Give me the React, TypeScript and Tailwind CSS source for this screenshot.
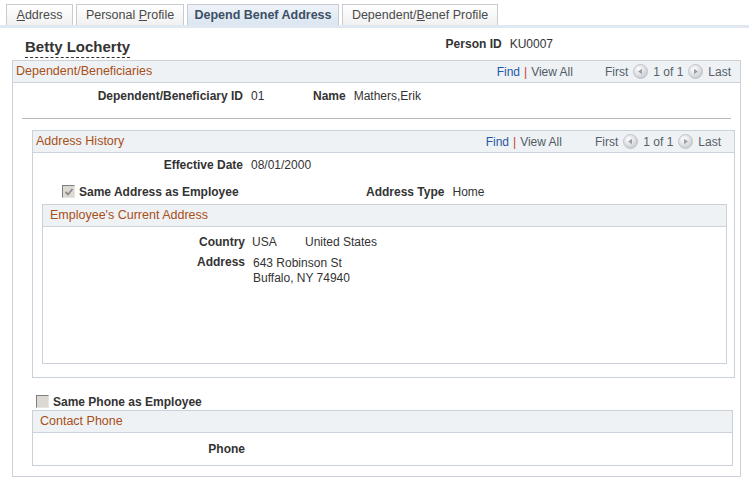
import React from "react";

const font = { fontFamily: '"Liberation Sans", Arial, sans-serif' };

function NavArrow({ dir }: { dir: "left" | "right" }) {
  return (
    <svg width="15" height="15" viewBox="0 0 15 15" className="inline-block">
      <defs>
        <radialGradient id={`g-${dir}`} cx="40%" cy="35%" r="70%">
          <stop offset="0%" stopColor="#ffffff" />
          <stop offset="100%" stopColor="#c4c8cc" />
        </radialGradient>
      </defs>
      <circle cx="7.5" cy="7.5" r="7" fill={`url(#g-${dir})`} stroke="#b9bec4" strokeWidth="0.8" />
      {dir === "left" ? (
        <path d="M5 7.5 L9 4.8 L9 10.2 Z" fill="#9aa0a6" />
      ) : (
        <path d="M10 7.5 L6 4.8 L6 10.2 Z" fill="#9aa0a6" />
      )}
    </svg>
  );
}

function Nav({ gap }: { gap: string }) {
  return (
    <div className="flex items-center text-[12px]">
      <span className="text-[#1f58a6]">Find</span>
      <span className="mx-[4px] text-[#c83a3a]">|</span>
      <span className="text-[#4f5b66]">View All</span>
      <div className={`flex items-center text-[#55606a] ${gap}`}>
        <span>First</span>
        <span className="mx-[5px] flex">
          <NavArrow dir="left" />
        </span>
        <span>1 of 1</span>
        <span className="mx-[5px] flex">
          <NavArrow dir="right" />
        </span>
        <span>Last</span>
      </div>
    </div>
  );
}

function Checkbox({ checked }: { checked?: boolean }) {
  return (
    <span className="inline-flex h-[13px] w-[13px] items-center justify-center border-t border-l border-t-[#7f7f7f] border-l-[#7f7f7f] border-b border-r border-b-[#e4e4e4] border-r-[#e4e4e4] bg-[#dcd9d2]">
      {checked && (
        <svg width="10" height="10" viewBox="0 0 10 10">
          <path d="M1.5 5 L4 7.5 L8.5 2" fill="none" stroke="#8a8a8a" strokeWidth="1.8" />
        </svg>
      )}
    </span>
  );
}

function SectionHeader({
  title,
  pad = "pl-[3px]",
  children,
}: {
  title: string;
  pad?: string;
  children?: React.ReactNode;
}) {
  return (
    <div className={`flex h-[22px] items-center justify-between border-b border-[#cdd3da] bg-[#eff2f4] pr-[3px] ${pad}`}>
      <span className="text-[12.5px] text-[#a84f18]">{title}</span>
      {children}
    </div>
  );
}

export default function App() {
  const tabs = [
    { label: "Address", u: 0, w: "w-[67px]" },
    { label: "Personal Profile", u: 9, w: "w-[108px]" },
    { label: "Depend Benef Address", u: -1, w: "w-[152px]", active: true },
    { label: "Dependent/Benef Profile", u: 10, w: "w-[156px]" },
  ];

  return (
    <div style={font} className="h-[483px] w-[749px] overflow-hidden bg-white text-[12px] text-[#333]">
      {/* Tabs */}
      <div className="flex items-end gap-[3px] pl-[6px] pt-[4px]">
        {tabs.map((t) => (
          <div
            key={t.label}
            className={`flex h-[21px] items-center justify-center border border-b-0 text-[12.5px] ${t.w} ${
              t.active
                ? "border-[#c5ccd4] bg-gradient-to-b from-[#eef3f8] to-[#dbe6f1] font-bold text-[#3d4f66]"
                : "border-[#c8ccd0] bg-gradient-to-b from-[#ffffff] to-[#f1f1f1] text-[#4a4a4a]"
            }`}
          >
            {t.u >= 0 ? (
              <span>
                {t.label.slice(0, t.u)}
                <span className="underline">{t.label[t.u]}</span>
                {t.label.slice(t.u + 1)}
              </span>
            ) : (
              t.label
            )}
          </div>
        ))}
      </div>
      <div className="h-[3px] bg-[#e0e8f1]" />

      {/* Person header */}
      <div className="flex h-[32px] items-center pl-[25px]">
        <span className="mb-[2px] self-end border-b border-dashed border-[#333] pb-[1px] text-[15px] font-bold leading-[18px]">
          Betty Locherty
        </span>
        <div className="ml-auto mr-[196px] mt-[7px] flex items-center self-start">
          <span className="font-bold">Person ID</span>
          <span className="ml-[8px]">KU0007</span>
        </div>
      </div>

      {/* Outer box */}
      <div className="ml-[12px] h-[417px] w-[729px] border border-[#cbd1d8]">
        <SectionHeader title="Dependent/Beneficiaries">
          <div className="pr-[6px]">
            <Nav gap="ml-[32px]" />
          </div>
        </SectionHeader>

        <div className="flex h-[26px] items-center">
          <span className="w-[230px] text-right font-bold">Dependent/Beneficiary ID</span>
          <span className="ml-[8px] w-[62px]">01</span>
          <span className="font-bold">Name</span>
          <span className="ml-[8px]">Mathers,Erik</span>
        </div>

        <div className="mx-[9px] mt-[9px] h-[2px] border-t border-[#b9b9b9]" />

        {/* Address History */}
        <div className="ml-[19px] mr-[5px] mt-[10px] h-[248px] border border-[#cbd1d8]">
          <SectionHeader title="Address History">
            <div className="pr-[10px]">
              <Nav gap="ml-[33px]" />
            </div>
          </SectionHeader>

          <div className="flex h-[23px] items-center">
            <span className="w-[210px] text-right font-bold">Effective Date</span>
            <span className="ml-[8px]">08/01/2000</span>
          </div>

          <div className="flex h-[28px] items-center whitespace-nowrap pt-[3px]">
            <span className="ml-[29px] flex">
              <Checkbox checked />
            </span>
            <span className="ml-[4px] w-[287px] font-bold">Same Address as Employee</span>
            <span className="font-bold">Address Type</span>
            <span className="ml-[8px]">Home</span>
          </div>

          {/* Employee's Current Address */}
          <div className="ml-[9px] mr-[7px] h-[160px] border border-[#cbd1d8]">
            <SectionHeader title="Employee's Current Address" pad="pl-[7px]" />
            <div className="flex h-[26px] items-center pt-[4px]">
              <span className="w-[202px] text-right font-bold">Country</span>
              <span className="ml-[7px] w-[53px]">USA</span>
              <span>United States</span>
            </div>
            <div className="flex">
              <span className="w-[202px] text-right font-bold">Address</span>
              <div className="ml-[8px] mt-[3px] leading-[15px]">
                <div>643 Robinson St</div>
                <div>Buffalo, NY 74940</div>
              </div>
            </div>
          </div>
        </div>

        {/* Same phone */}
        <div className="mt-[15px] flex h-[17px] items-center pl-[23px]">
          <Checkbox />
          <span className="ml-[4px] font-bold">Same Phone as Employee</span>
        </div>

        {/* Contact Phone */}
        <div className="ml-[19px] mr-[7px] h-[56px] border border-[#cbd1d8]">
          <SectionHeader title="Contact Phone" pad="pl-[7px]" />
          <div className="flex h-[32px] items-center">
            <span className="w-[212px] text-right font-bold">Phone</span>
          </div>
        </div>
      </div>
    </div>
  );
}
